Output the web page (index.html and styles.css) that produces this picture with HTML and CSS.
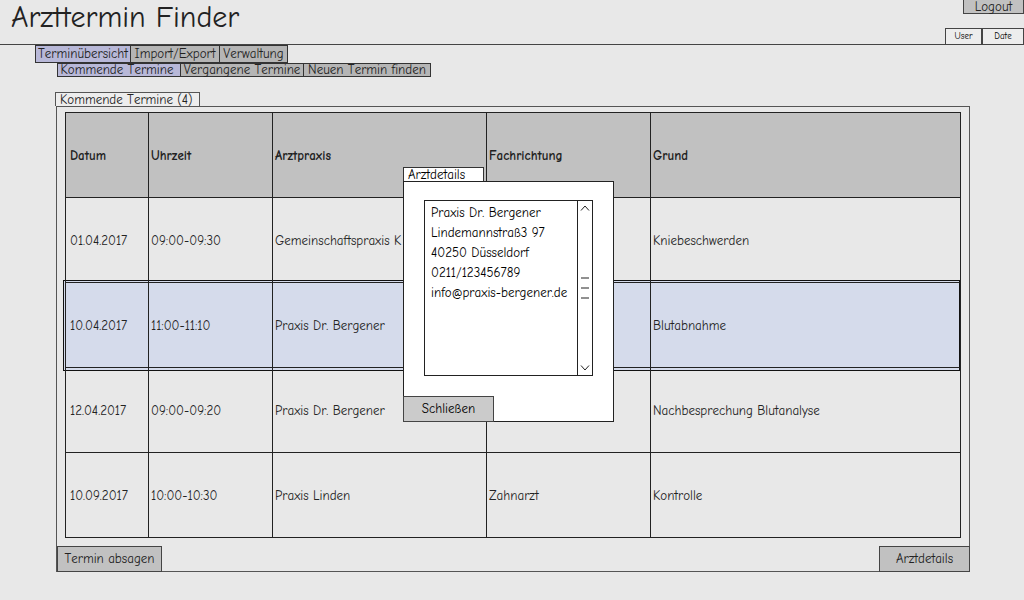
FILE: index.html
```html
<!DOCTYPE html>
<html lang="de">
<head>
<meta charset="utf-8">
<meta name="viewport" content="width=device-width, initial-scale=1">
<title>Arzttermin Finder</title>
<link rel="stylesheet" href="styles.css">
</head>
<body>
<header class="header">
  <h1 class="title">Arzttermin Finder</h1>
  <div class="account">
    <button class="logout" type="button">Logout</button>
    <div class="status"><span class="status-item">User</span><span class="status-item status-date">Date</span></div>
  </div>
</header>
<nav class="tabs" aria-label="Hauptmenü">
  <a class="tab tab-overview active" href="#">Terminübersicht</a>
  <a class="tab tab-transfer" href="#">Import/Export</a>
  <a class="tab tab-admin" href="#">Verwaltung</a>
</nav>
<nav class="tabs subtabs" aria-label="Termine">
  <a class="tab subtab active" href="#">Kommende Termine</a>
  <a class="tab subtab" href="#">Vergangene Termine</a>
  <a class="tab subtab subtab-last" href="#">Neuen Termin finden</a>
</nav>
<main class="content">
  <h2 class="caption">Kommende Termine (4)</h2>
  <section class="panel">
    <div class="table-area">
      <table class="appointments">
        <colgroup><col class="col-date"><col class="col-time"><col class="col-practice"><col class="col-field"><col></colgroup>
        <thead>
          <tr><th>Datum</th><th>Uhrzeit</th><th>Arztpraxis</th><th>Fachrichtung</th><th>Grund</th></tr>
        </thead>
        <tbody>
          <tr><td>01.04.2017</td><td>09:00-09:30</td><td>Gemeinschaftspraxis K</td><td></td><td>Kniebeschwerden</td></tr>
          <tr class="selected"><td>10.04.2017</td><td>11:00-11:10</td><td>Praxis Dr. Bergener</td><td></td><td>Blutabnahme</td></tr>
          <tr><td>12.04.2017</td><td>09:00-09:20</td><td>Praxis Dr. Bergener</td><td></td><td>Nachbesprechung Blutanalyse</td></tr>
          <tr><td>10.09.2017</td><td>10:00-10:30</td><td>Praxis Linden</td><td>Zahnarzt</td><td>Kontrolle</td></tr>
        </tbody>
      </table>
    </div>
    <div class="actions">
      <button class="button button-cancel" type="button">Termin absagen</button>
      <button class="button button-details" type="button">Arztdetails</button>
    </div>
  </section>
</main>
<div class="dialog" role="dialog" aria-labelledby="dialog-title">
  <h2 class="dialog-title" id="dialog-title">Arztdetails</h2>
  <div class="dialog-body">
    <div class="listbox">
      <ul class="details">
        <li>Praxis Dr. Bergener</li>
        <li>Lindemannstraß3 97</li>
        <li>40250 Düsseldorf</li>
        <li>0211/123456789</li>
        <li>info@praxis-bergener.de</li>
      </ul>
      <div class="scrollbar">
        <svg class="arrow" viewBox="0 0 10 6"><path d="M1 5.5 L5 1 L9 5.5"/></svg>
        <svg class="grip" viewBox="0 0 8 22"><path d="M0 1H8M0 11H8M0 21H8"/></svg>
        <svg class="arrow" viewBox="0 0 10 6"><path d="M1 .5 L5 5 L9 .5"/></svg>
      </div>
    </div>
    <button class="button button-close" type="button">Schließen</button>
  </div>
</div>
</body>
</html>
```
FILE: styles.css
```css
* {
  box-sizing: border-box;
}

body {
  margin: 0;
  position: relative;
  background: #e8e8e8;
  color: #222;
  font: 13px/16px "Comic Sans MS", "Comic Neue", "Noto Sans", sans-serif;
  font-kerning: none;
  font-variant-ligatures: none;
}

button {
  font: inherit;
  font-kerning: none;
  font-variant-ligatures: none;
  color: inherit;
  padding: 0;
}

h1,
h2 {
  margin: 0;
  font-weight: normal;
}

.header {
  display: flex;
  justify-content: space-between;
  height: 45px;
  border-bottom: 1px solid #444;
}

.title {
  padding-left: 11px;
  font-size: 30px;
  line-height: 35px;
}

.account {
  display: flex;
  flex-direction: column;
  justify-content: space-between;
  align-items: flex-end;
}

.logout {
  width: 61px;
  height: 14px;
  background: #c1c1c1;
  border: 1px solid #444;
  border-top: 0;
  line-height: 12px;
}

.status {
  display: flex;
  font-size: 9px;
  line-height: 15px;
  text-align: center;
}

.status-item {
  width: 37px;
  border: 1px solid #444;
  border-bottom: 0;
  background: #ededed;
  color: #000;
}

.status-date {
  width: 42px;
}

.tabs {
  display: flex;
  padding-left: 35px;
}

.tab {
  border: 1px solid #333;
  margin-right: -1px;
  background: #b5b5b5;
  color: inherit;
  line-height: 16px;
  text-align: center;
  text-decoration: none;
  white-space: nowrap;
}

.active {
  background: #b8b8d8;
}

.tab-overview {
  width: 96px;
}

.tab-transfer {
  width: 90px;
}

.tab-admin {
  width: 69px;
}

.subtabs {
  padding-left: 57px;
}

.subtab {
  width: 124px;
  line-height: 12px;
}

.subtab.active {
  padding-right: 4px;
}

.subtab-last {
  width: 128px;
}

.content {
  padding: 15px 54px 28px 56px;
}

.caption {
  width: 145px;
  margin-left: -1px;
  padding-left: 4px;
  border: 1px solid #555;
  border-bottom: 0;
  background: #ededed;
  font-size: 13px;
  line-height: 13px;
}

.panel {
  border: 1px solid #555;
}

.table-area {
  padding: 5px 8px 8px;
}

.appointments {
  width: 100%;
  table-layout: fixed;
  border-collapse: collapse;
}

.col-date {
  width: 83px;
}

.col-time {
  width: 124px;
}

.col-practice {
  width: 214px;
}

.col-field {
  width: 164px;
}

th,
td {
  height: 85px;
  padding: 1px 2px 0;
  border: 1px solid #222;
  text-align: left;
  white-space: nowrap;
}

th:first-child,
td:first-child {
  padding-left: 4px;
}

th {
  background: #c1c1c1;
}

.selected {
  position: relative;
}

.selected td:first-child::after {
  content: "";
  position: absolute;
  z-index: -1;
  inset: -3px 1px -3px -3px;
  border: 1px solid #111;
  background: #d5dbeb;
}

.actions {
  display: flex;
  justify-content: space-between;
  margin: 0 -1px -1px 0;
}

.button {
  height: 26px;
  border: 1px solid #444;
  background: #c1c1c1;
  text-align: center;
}

.button-cancel {
  width: 105px;
}

.button-details {
  width: 91px;
}

.dialog {
  position: absolute;
  top: 167px;
  left: 403px;
  width: 211px;
  color: #000;
}

.dialog-title {
  width: 81px;
  padding-left: 4px;
  border: 1px solid #333;
  border-bottom: 0;
  background: #fff;
  font-size: 13px;
  line-height: 13px;
}

.dialog-body {
  border: 1px solid #222;
  background: #fff;
}

.listbox {
  display: flex;
  height: 176px;
  margin: 18px 20px 20px;
  border: 1px solid #222;
}

.details {
  flex: 1;
  margin: 0;
  padding: 2px 0 0 6px;
  list-style: none;
  line-height: 20px;
  white-space: nowrap;
}

.scrollbar {
  display: flex;
  flex-direction: column;
  justify-content: space-between;
  align-items: center;
  width: 15px;
  padding: 4px 0;
  border-left: 1px solid #222;
}

.scrollbar svg {
  fill: none;
  stroke: #222;
}

.arrow {
  width: 10px;
  height: 6px;
}

.grip {
  width: 8px;
  height: 22px;
}

.button-close {
  display: block;
  width: 91px;
  margin: 0 0 -1px -1px;
  background: #cbcbcb;
}
```
